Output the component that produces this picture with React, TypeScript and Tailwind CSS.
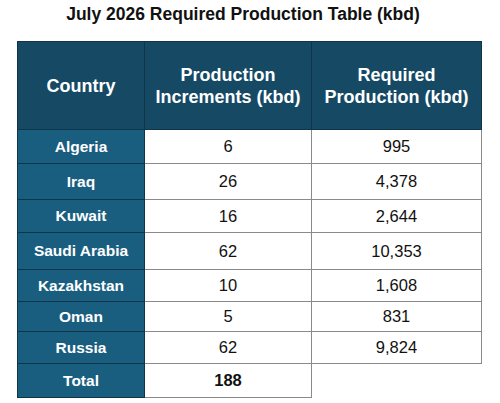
import React from 'react';

interface Row {
  country: string;
  increment: string;
  required: string;
  h: string;
}

const rows: Row[] = [
  { country: 'Algeria', increment: '6', required: '995', h: 'h-[34px]' },
  { country: 'Iraq', increment: '26', required: '4,378', h: 'h-[36px]' },
  { country: 'Kuwait', increment: '16', required: '2,644', h: 'h-[33px]' },
  { country: 'Saudi Arabia', increment: '62', required: '10,353', h: 'h-[37px]' },
  { country: 'Kazakhstan', increment: '10', required: '1,608', h: 'h-[32px]' },
  { country: 'Oman', increment: '5', required: '831', h: 'h-[30px]' },
  { country: 'Russia', increment: '62', required: '9,824', h: 'h-[32px]' },
];

const countryCell =
  'w-[128px] flex items-center justify-center bg-[#1a5e7f] text-white font-bold text-[15.5px] border-l border-r border-b border-[#0e3549]';
const valueCell =
  'flex items-center justify-center bg-white text-[#111] text-[16.5px] border-r border-b border-[#8a8a8a]';

export default function App() {
  return (
    <div className="w-[500px] h-[403px] bg-white font-['Liberation_Sans',Arial,sans-serif] overflow-hidden">
      <h1 className="h-[29px] pt-[4px] pr-[14px] text-center text-[17.5px] font-bold text-[#111] leading-[20px]">
        July 2026 Required Production Table (kbd)
      </h1>
      <div className="mt-[12px] ml-[17px] w-[465px] flex flex-col">
        <div className="flex h-[89px] bg-[#164a64] text-white font-bold text-[18px] leading-[22px] text-center border-t border-[#0e3549]">
          <div className="w-[128px] flex items-center justify-center border-l border-r border-b border-[#0e3549]">
            Country
          </div>
          <div className="w-[167px] flex items-center justify-center border-r border-b border-[#0e3549]">
            Production
            <br />
            Increments (kbd)
          </div>
          <div className="w-[170px] flex items-center justify-center border-r border-b border-[#0e3549]">
            Required
            <br />
            Production (kbd)
          </div>
        </div>
        {rows.map((r) => (
          <div key={r.country} className={`flex ${r.h}`}>
            <div className={countryCell}>{r.country}</div>
            <div className={`w-[167px] ${valueCell}`}>{r.increment}</div>
            <div className={`w-[170px] ${valueCell}`}>{r.required}</div>
          </div>
        ))}
        <div className="flex h-[34px]">
          <div className={countryCell}>Total</div>
          <div className={`w-[167px] ${valueCell} font-bold`}>188</div>
        </div>
      </div>
    </div>
  );
}
